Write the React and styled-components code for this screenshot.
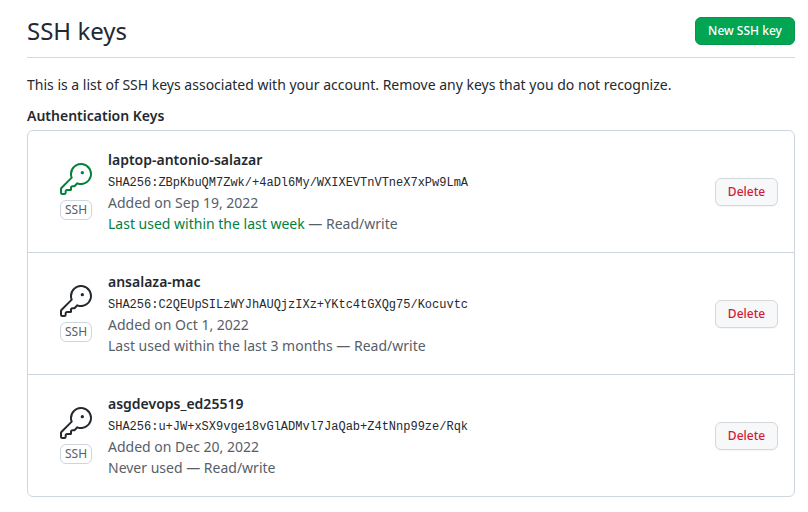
import React from 'react';
import styled, { createGlobalStyle } from 'styled-components';

const Global = createGlobalStyle`
  * { box-sizing: border-box; }
  body { margin: 0; background: #fff; color: #24292f; font: 14px/21px "Noto Sans", sans-serif; }
`;
const Page = styled.main`
  width: 808px; height: 512px; overflow: hidden; padding: 13px 13px 0 27px;
`;
const Header = styled.header`
  display: flex; justify-content: space-between; align-items: flex-start;
  height: 45px; border-bottom: 1px solid #d3dadf;
`;
const Title = styled.h1`
  margin: 0; font-size: 24px; line-height: 36px; font-weight: 400;
`;
const Button = styled.button`
  font: 500 12px/18px "Noto Sans", sans-serif; border-radius: 6px; padding: 0; white-space: nowrap;
`;
const NewButton = styled(Button)`
  margin-top: 4px; width: 100px; height: 28px; color: #fff; background: #02a551; border: 1px solid #07964b;
`;
const DeleteButton = styled(Button)`
  margin-top: 1px; width: 63px; height: 28px; color: #d31c38; background: #f6f8fa; border: 1px solid #d5d8da;
  box-shadow: 0 1px 0 rgba(27, 31, 36, 0.04);
`;
const Intro = styled.p`
  margin: 16px 0 10px;
`;
const Subtitle = styled.h2`
  margin: 0; font-size: 14px; line-height: 21px; font-weight: 600;
`;
const KeyList = styled.ul`
  list-style: none; margin: 4px 0 0; padding: 0; border: 1px solid #cdd6de; border-radius: 6px;
`;
const KeyRow = styled.li`
  display: flex; align-items: center; height: 121px; padding: 0 16px 0 32px;
  & + & { height: 122px; border-top: 1px solid #cdd6de; }
`;
const KeyBadge = styled.div`
  display: flex; flex-direction: column; align-items: center; width: 32px; margin-right: 16px;
  color: ${p => p.$recent ? '#02813d' : '#24292f'};
`;
const Tag = styled.span`
  width: 32px; height: 20px; margin-top: 5px; border: 1px solid #cdd6de; border-radius: 6px;
  color: #57606a; font-size: 12px; line-height: 18px; text-align: center;
`;
const Details = styled.div`
  flex: 1; color: #57606a;
`;
const Name = styled.strong`
  display: block; color: #24292f; font-weight: 600;
`;
const Fingerprint = styled.code`
  display: block; height: 22px; padding-top: 5px; color: #24292f; font: 12px/17px "Liberation Mono", monospace;
`;
const Line = styled.div``;
const Recent = styled.span`
  color: ${p => p.$recent ? '#02813d' : 'inherit'};
`;
const Icon = styled.svg`
  display: block; width: 32px; height: 32px; fill: currentColor;
`;

const KeyIcon = () => (
  <Icon viewBox="0 0 24 24">
    <path d="M16.75 8.5a1.25 1.25 0 1 0 0-2.5 1.25 1.25 0 0 0 0 2.5Z" />
    <path d="M15.75 0a8.25 8.25 0 1 1-2.541 16.101l-1.636 1.636a1.744 1.744 0 0 1-1.237.513H9.25a.25.25 0 0 0-.25.25v1.448a.876.876 0 0 1-.256.619l-.214.213a.75.75 0 0 1-.545.22H5.25a.25.25 0 0 0-.25.25v1A1.75 1.75 0 0 1 3.25 24h-1.5A1.75 1.75 0 0 1 0 22.25v-2.836c0-.464.185-.908.513-1.236l7.386-7.388A8.249 8.249 0 0 1 15.75 0ZM9 8.25a6.733 6.733 0 0 0 .463 2.462.75.75 0 0 1-.168.804l-7.722 7.721a.25.25 0 0 0-.073.177v2.836c0 .138.112.25.25.25h1.5a.25.25 0 0 0 .25-.25v-1c0-.966.784-1.75 1.75-1.75H7.5v-1c0-.966.784-1.75 1.75-1.75h1.086a.25.25 0 0 0 .177-.073l1.971-1.972a.75.75 0 0 1 .804-.168A6.75 6.75 0 1 0 9 8.25Z" />
  </Icon>
);

const keys = [
  { name: 'laptop-antonio-salazar', hash: 'SHA256:ZBpKbuQM7Zwk/+4aDl6My/WXIXEVTnVTneX7xPw9LmA', added: 'Sep 19, 2022', used: 'Last used within the last week', recent: true },
  { name: 'ansalaza-mac', hash: 'SHA256:C2QEUpSILzWYJhAUQjzIXz+YKtc4tGXQg75/Kocuvtc', added: 'Oct 1, 2022', used: 'Last used within the last 3 months' },
  { name: 'asgdevops_ed25519', hash: 'SHA256:u+JW+xSX9vge18vGlADMvl7JaQab+Z4tNnp99ze/Rqk', added: 'Dec 20, 2022', used: 'Never used' },
];

export default function App() {
  return (
    <>
      <Global />
      <Page>
        <Header>
          <Title>SSH keys</Title>
          <NewButton>New SSH key</NewButton>
        </Header>
        <Intro>This is a list of SSH keys associated with your account. Remove any keys that you do not recognize.</Intro>
        <Subtitle>Authentication Keys</Subtitle>
        <KeyList>
          {keys.map(k => (
            <KeyRow key={k.name}>
              <KeyBadge $recent={k.recent}>
                <KeyIcon />
                <Tag>SSH</Tag>
              </KeyBadge>
              <Details>
                <Name>{k.name}</Name>
                <Fingerprint>{k.hash}</Fingerprint>
                <Line>Added on {k.added}</Line>
                <Line><Recent $recent={k.recent}>{k.used}</Recent> — Read/write</Line>
              </Details>
              <DeleteButton>Delete</DeleteButton>
            </KeyRow>
          ))}
        </KeyList>
      </Page>
    </>
  );
}
